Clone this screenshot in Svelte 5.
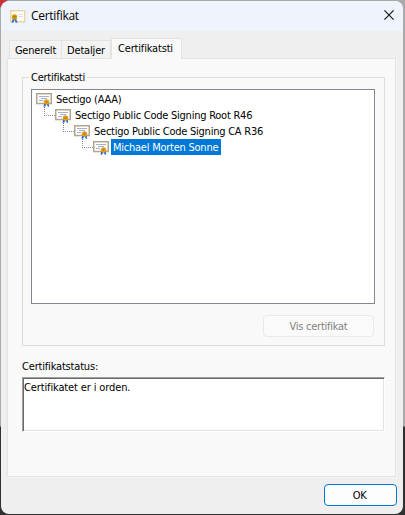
<script>
  const chain = ['Sectigo (AAA)', 'Sectigo Public Code Signing Root R46', 'Sectigo Public Code Signing CA R36', 'Michael Morten Sonne'];
  const tabs = ['Generelt', 'Detaljer', 'Certifikatsti'];
  let active = $state(2);
  let selected = $state(3);
</script>

{#snippet certificate()}
  <svg class="cert" width="16" height="16" viewBox="0 0 16 16">
    <rect x="0.75" y="2.75" width="14.5" height="9.8" fill="#fff" stroke="#b3a68f" stroke-width="1.5" />
    <path d="M3 5.5h10M5 7.5h6M3 9.5h4" stroke="#a7afd2" fill="none" />
    <path d="M8.3 12L7.5 16L9.5 15.3L10.5 12ZM10.5 12L11.5 15.3L13.2 16L12.5 12Z" fill="#1d5fd6" />
    <circle cx="10.5" cy="11" r="2.8" fill="#e2a11c" />
    <circle cx="10.5" cy="11" r="1" fill="#b57816" />
  </svg>
{/snippet}

<div class="desktop">
  <div class="dialog">
    <header>
      <svg class="app" width="16" height="14" viewBox="0 0 16 14">
        <rect x="0.75" y="0.75" width="14" height="11" fill="#fffdf8" stroke="#ebcf9e" stroke-width="1.3" />
        <path d="M8 4.5h5M8 6.5h5" stroke="#dce1ef" />
        <path d="M3 8L1.5 13L3.5 12.2L4.5 9.5L5.5 12.2L7.5 13L6 8Z" fill="#246bd0" />
        <circle cx="4.5" cy="7" r="2.7" fill="#d39a10" />
        <circle cx="4.5" cy="7" r="1" fill="#a87508" />
      </svg>
      <span class="title">Certifikat</span>
      <svg class="close" width="10" height="10" viewBox="0 0 10 10"><path d="M0.4 0.4L9.6 9.6M9.6 0.4L0.4 9.6" stroke="#151515" stroke-width="1.15" /></svg>
    </header>

    <nav>
      {#each tabs as tab, i}
        <button class="tab t{i}" class:active={active === i} onclick={() => (active = i)}>{tab}</button>
      {/each}
    </nav>

    <main>
      <section class="group">
        <h2>Certifikatsti</h2>
        <div class="tree">
          {#each chain as name, i}
            <div class="row" style="padding-left: {i ? (i - 1) * 19 + 12 : 4}px">
              {#if i}<span class="branch"></span>{/if}
              {@render certificate()}
              <button class="name" class:selected={selected === i} onclick={() => (selected = i)}>{name}</button>
            </div>
          {/each}
        </div>
        <button class="view" disabled>Vis certifikat</button>
      </section>
      <div class="label">Certifikatstatus:</div>
      <div class="status">Certifikatet er i orden.</div>
    </main>

    <footer><button class="ok">OK</button></footer>
  </div>
</div>

<style>
  .desktop {
    box-sizing: border-box;
    width: 405px;
    height: 515px;
    padding: 1px 2px 1px 1px;
    background:
      linear-gradient(135deg, #c4323a 5px, transparent 6px),
      linear-gradient(#aaa 0, #aaa 426px, #303030 427px);
    overflow: hidden;
    font: 11px/13px "DejaVu Sans Condensed", "DejaVu Sans", sans-serif;
    font-stretch: condensed;
    letter-spacing: -0.18px;
    color: #000;
  }
  .dialog {
    display: flex;
    flex-direction: column;
    width: 402px;
    height: 513px;
    border-radius: 8px;
    background: #efefef;
    overflow: hidden;
  }
  button { padding: 0; margin: 0; font: inherit; letter-spacing: inherit; color: inherit; box-sizing: border-box; white-space: nowrap; }
  header { display: flex; align-items: center; box-sizing: border-box; height: 30px; flex: none; padding: 0 9px 0 9px; background: #eff3fb; }
  .app { margin-top: 2px; }
  .title { margin-left: 5px; font: 12px/16px "Open Sans", "Noto Sans", sans-serif; letter-spacing: -0.3px; }
  .close { margin: -2px 0 0 auto; }
  nav { display: flex; align-items: flex-end; height: 27px; padding-left: 8px; flex: none; }
  .tab { height: 18px; border: 1px solid #e3e3e3; border-bottom: 0; background: #f3f3f3; text-align: center; }
  .t0 { width: 53px; padding-top: 1px; }
  .t1 { width: 49px; padding-top: 1px; border-left: 0; }
  .t2 { width: 71px; }
  .tab.active { height: 21px; margin-bottom: -1px; padding: 0 2px 2px 0; position: relative; background: #f9f9f9; }
  main { box-sizing: border-box; width: 389px; height: 419px; margin-left: 6px; padding: 18px 0 0 14px; border: 1px solid #e3e3e3; box-shadow: 1px 1px #f5f5f5; background: #f9f9f9; flex: none; }
  .group { box-sizing: border-box; width: 363px; height: 269px; padding: 0 9px 0 8px; border: 1px solid #dcdcdc; }
  h2 { display: table; margin: -7px 0 5px -2px; padding: 0 2px; font: inherit; letter-spacing: -0.25px; background: #f9f9f9; }
  .tree { box-sizing: border-box; width: 344px; height: 215px; padding-top: 1px; border: 1px solid #828790; background: #fff; }
  .row { display: flex; height: 16px; white-space: nowrap; letter-spacing: -0.24px; }
  .branch { box-sizing: border-box; width: 11px; height: 9px; border-left: 1px dotted #888; border-bottom: 1px dotted #888; flex: none; }
  .cert { flex: none; }
  .name { height: 16px; margin-left: 2px; padding: 0 2px; border: 0; background: none; text-align: left; }
  .selected { width: 110px; padding-left: 2px; color: #fff; background: #0078d7; }
  .view { display: block; width: 111px; height: 22px; margin: 11px 1px 0 auto; border: 1px solid #e9e9e9; border-radius: 4px; background: #fafafa; color: #838383; letter-spacing: -0.25px; }
  .label { margin-top: 14px; height: 17px; }
  .status { box-sizing: border-box; width: 363px; height: 55px; padding: 3px 1px; border: 1px solid; border-color: #a0a0a0 #fff #fff #a0a0a0; box-shadow: inset 1px 1px #696969, inset -1px -1px #e3e3e3; background: #fff; letter-spacing: -0.13px; }
  footer { display: flex; justify-content: flex-end; padding: 7px 6px 0 0; }
  .ok { width: 73px; height: 22px; padding-right: 2px; border: 1px solid #0078d4; border-radius: 4px; background: #fdfdfd; letter-spacing: -0.4px; }
</style>
